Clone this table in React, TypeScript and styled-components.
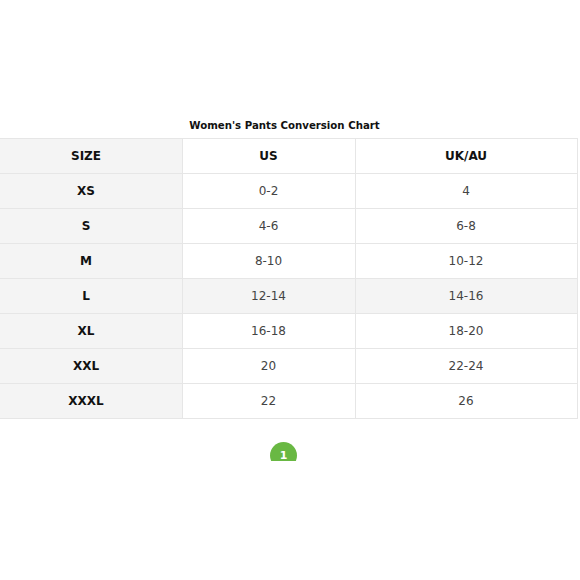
import React from 'react';
import styled, { createGlobalStyle } from 'styled-components';

const GlobalStyle = createGlobalStyle`
  html, body {
    margin: 0;
    padding: 0;
    background: #ffffff;
    overflow: hidden;
  }
  body {
    font-family: 'DejaVu Sans', 'Open Sans', sans-serif;
    color: #222;
  }
`;

const Page = styled.div`
  width: 580px;
  height: 580px;
  overflow: hidden;
  padding-top: 118px;
  box-sizing: border-box;
`;

const ChartWrap = styled.div`
  margin-left: -10px;
  width: 587px;
  display: flex;
  flex-direction: column;
  align-items: center;
`;

const Title = styled.h3`
  margin: 0 0 4px;
  font-size: 10.2px;
  line-height: 16px;
  font-weight: 700;
  color: #111;
  padding-left: 2px;
`;

const Table = styled.table`
  width: 100%;
  border-collapse: collapse;
  table-layout: fixed;

  & td,
  & th {
    border: 1px solid #e6e6e6;
    height: 35px;
    padding: 0;
    text-align: center;
    font-size: 12px;
    box-sizing: border-box;
  }
`;

const Row = styled.tr<{ $shaded?: boolean }>`
  background: ${(p) => (p.$shaded ? '#f4f4f4' : '#ffffff')};
`;

const SizeCell = styled.td`
  background: #f4f4f4;
  font-weight: 700;
  color: #111;
`;

const HeadCell = styled.th<{ $shaded?: boolean }>`
  background: ${(p) => (p.$shaded ? '#f4f4f4' : 'transparent')};
  font-weight: 700;
  color: #111;
`;

const ValueCell = styled.td`
  color: #444;
  font-weight: 400;
`;

const PagerClip = styled.div`
  margin-top: 23px;
  height: 19px;
  overflow: hidden;
  display: flex;
  justify-content: center;
  padding-left: 0;
`;

const PageDot = styled.div`
  width: 27px;
  height: 27px;
  border-radius: 50%;
  background: #69b843;
  color: #fff;
  font-size: 11px;
  font-weight: 700;
  display: flex;
  align-items: center;
  justify-content: center;
  flex-shrink: 0;
`;

const rows = [
  ['XS', '0-2', '4'],
  ['S', '4-6', '6-8'],
  ['M', '8-10', '10-12'],
  ['L', '12-14', '14-16'],
  ['XL', '16-18', '18-20'],
  ['XXL', '20', '22-24'],
  ['XXXL', '22', '26'],
];

export default function App() {
  return (
    <>
      <GlobalStyle />
      <Page>
        <ChartWrap>
          <Title>Women's Pants Conversion Chart</Title>
          <Table>
            <colgroup>
              <col style={{ width: 192 }} />
              <col style={{ width: 173 }} />
              <col style={{ width: 222 }} />
            </colgroup>
            <thead>
              <tr>
                <HeadCell $shaded>SIZE</HeadCell>
                <HeadCell>US</HeadCell>
                <HeadCell>UK/AU</HeadCell>
              </tr>
            </thead>
            <tbody>
              {rows.map(([size, us, uk]) => (
                <Row key={size} $shaded={size === 'L'}>
                  <SizeCell>{size}</SizeCell>
                  <ValueCell>{us}</ValueCell>
                  <ValueCell>{uk}</ValueCell>
                </Row>
              ))}
            </tbody>
          </Table>
          <PagerClip>
            <PageDot>1</PageDot>
          </PagerClip>
        </ChartWrap>
      </Page>
    </>
  );
}
